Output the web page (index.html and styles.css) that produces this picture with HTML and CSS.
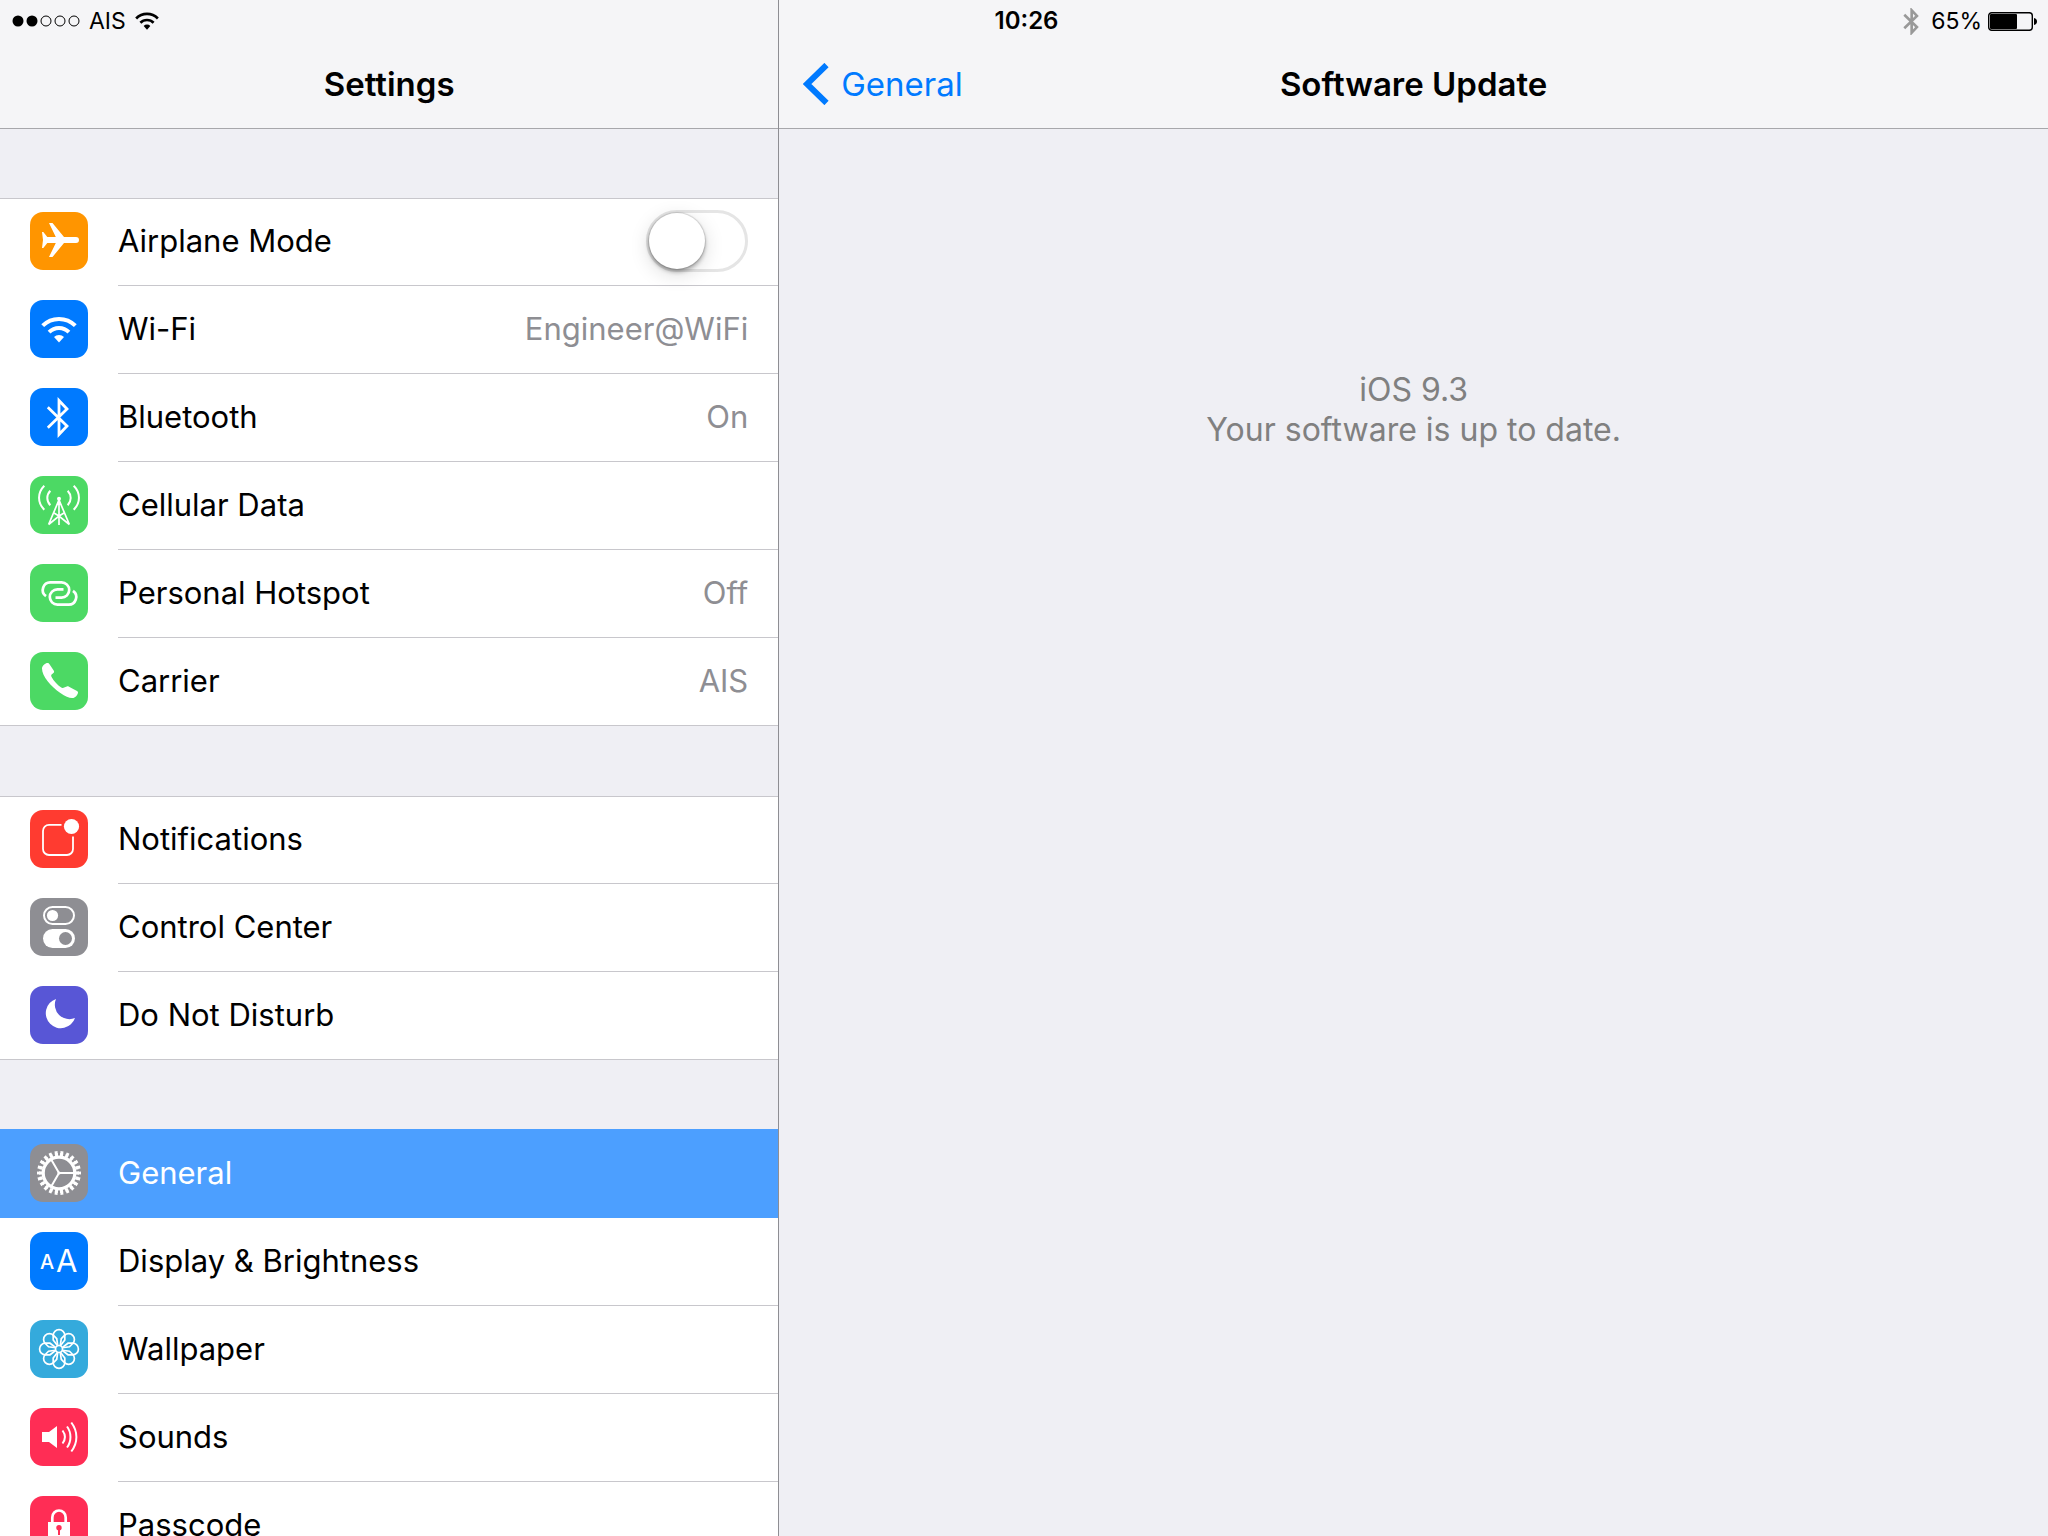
FILE: index.html
```html
<!DOCTYPE html>
<html lang="en">
<head>
    <meta charset="UTF-8">
    <meta name="viewport" content="width=device-width, initial-scale=1.0">
    <title>Settings</title>
    <link rel="stylesheet" href="styles.css">
</head>
<body>
    <!-- shapes used more than once -->
    <svg class="defs" aria-hidden="true">
        <symbol id="wifi" viewBox="11 16 36 27">
            <path d="M12.7 25.7a23 23 0 0 1 32.6 0M19.1 32.1a14 14 0 0 1 19.8 0" fill="none" stroke="currentColor" stroke-width="4"/>
            <path d="M24 37a7 7 0 0 1 10 0l-5 5.5z" fill="currentColor"/>
        </symbol>
        <symbol id="bluetooth" viewBox="16 9 24 41">
            <path d="M17.8 19.3L37 38l-8 8.5v-34L37 21 17.8 39.7" fill="none" stroke="currentColor"/>
        </symbol>
        <path id="petal" d="M27.6 25.8L23.2 20v-4.600a5.8 5.8 0 0 1 11.6 0V20l-4.400 5.800"/>
    </svg>

    <div class="status-bar">
        <div class="status-left">
            <svg class="signal" viewBox="0 0 68 12">
                <circle cx="6" cy="6" r="5.5"/>
                <circle cx="20" cy="6" r="5.5"/>
                <g fill="none" stroke="#000">
                    <circle cx="34" cy="6" r="5"/>
                    <circle cx="48" cy="6" r="5"/>
                    <circle cx="62" cy="6" r="5"/>
                </g>
            </svg>
            <span>AIS</span>
            <svg class="status-wifi"><use href="#wifi"/></svg>
        </div>
        <div class="clock">10:26</div>
        <div class="status-right">
            <svg class="status-bluetooth"><use href="#bluetooth"/></svg>
            <span>65%</span>
            <svg class="battery" viewBox="0 0 49 19">
                <rect x="0.7" y="0.7" width="43.6" height="17.6" rx="3" fill="none" stroke="#000" stroke-width="1.4"/>
                <rect x="2" y="2" width="27" height="15" rx="1"/>
                <path d="M46 6c2 .4 3 1.6 3 3.5s-1 3.1-3 3.500z"/>
            </svg>
        </div>
    </div>

    <aside class="sidebar">
        <header class="nav-bar">
            <h1>Settings</h1>
        </header>

        <ul class="group">
            <li class="row">
                <svg class="icon orange" viewBox="0 0 58 58">
                    <path d="M12 20h1.3l4 5h8.5L19 11h3.5L34 25h12a3 3 0 0 1 0 6H34L22.5 45H19l6.8-14h-8.5l-4 5H12l1-8z" fill="#fff"/>
                </svg>
                <div class="cell">
                    <label for="airplane">Airplane Mode</label>
                    <input type="checkbox" id="airplane" class="switch">
                </div>
            </li>
            <li class="row">
                <svg class="icon blue" viewBox="0 0 58 58"><use href="#wifi" x="11" y="16" width="36" height="27"/></svg>
                <div class="cell"><span>Wi-Fi</span><span class="value">Engineer@WiFi</span></div>
            </li>
            <li class="row">
                <svg class="icon blue" viewBox="0 0 58 58"><use href="#bluetooth" x="16" y="9" width="24" height="41" stroke-width="2.8"/></svg>
                <div class="cell"><span>Bluetooth</span><span class="value">On</span></div>
            </li>
            <li class="row">
                <svg class="icon green" viewBox="0 0 58 58">
                    <circle cx="29" cy="22.7" r="2" fill="#fff"/>
                    <g fill="none" stroke="#fff" stroke-width="1.7">
                        <path d="M18.6 48.5L29 24l10.4 24.5M29 23v26M24 37l5 3 5-3M18.6 48.5L29 40l10.4 8.5"/>
                        <path d="M20.3 14.7c-4 4.3-4 10.3 0 14.6M37.7 14.7c4 4.3 4 10.3 0 14.6M14.3 9.7c-7 7-7 17 0 24M43.7 9.7c7 7 7 17 0 24" stroke-width="2"/>
                    </g>
                </svg>
                <div class="cell"><span>Cellular Data</span></div>
            </li>
            <li class="row">
                <svg class="icon green" viewBox="0 0 58 58">
                    <g fill="none" stroke="#fff" stroke-width="2.7">
                        <path d="M16 32.2A7.6 7.6 0 0 1 20.8 18.4H31.6A7.6 7.6 0 0 1 31.6 33.6H25.5"/>
                        <path d="M16 32.2A7.6 7.6 0 0 1 20.8 18.4H31.6A7.6 7.6 0 0 1 31.6 33.6H25.5" transform="rotate(180 29.5 29.5)"/>
                    </g>
                </svg>
                <div class="cell"><span>Personal Hotspot</span><span class="value">Off</span></div>
            </li>
            <li class="row">
                <svg class="icon green" viewBox="0 0 58 58">
                    <path d="M12 16.5c0-3 3.5-5.5 5.5-5.5 1 0 1.4.3 2 1.2l4.2 6.3c.6 1 .5 1.6 0 2.3l-2.1 1.8c-.6.8-.5 1.5 0 2.4 2 4 6 8 9.6 10.6.8.6 1.5.6 2.3.2l3.3-1.3c.8-.3 1.4-.2 2.2.3l8 4.2c1 .6 1.2 1.3.9 2.3-.6 2.2-2.5 4.2-4.5 4.6-3 .6-7.5-.8-13-4.8C21 34.5 12 24.5 12 16.5z" fill="#fff"/>
                </svg>
                <div class="cell"><span>Carrier</span><span class="value">AIS</span></div>
            </li>
        </ul>

        <ul class="group">
            <li class="row">
                <svg class="icon red" viewBox="0 0 58 58">
                    <path d="M31.5 14.9H19a6 6 0 0 0-6 6V39a6 6 0 0 0 6 6h18a6 6 0 0 0 6-6V26.5" fill="none" stroke="#fff" stroke-width="1.8"/>
                    <circle cx="41.5" cy="16.5" r="7.6" fill="#fff"/>
                </svg>
                <div class="cell"><span>Notifications</span></div>
            </li>
            <li class="row">
                <svg class="icon gray" viewBox="0 0 58 58">
                    <rect x="14" y="9" width="30" height="17" rx="8.5" fill="none" stroke="#fff" stroke-width="2"/>
                    <circle cx="22.5" cy="17.5" r="5.6" fill="#fff"/>
                    <rect x="13" y="31" width="32" height="19" rx="9.5" fill="#fff"/>
                    <circle cx="35.5" cy="40.5" r="6.5" fill="#8e8e93"/>
                </svg>
                <div class="cell"><span>Control Center</span></div>
            </li>
            <li class="row">
                <svg class="icon purple" viewBox="0 0 58 58">
                    <path d="M26 13A15 15 0 1 0 45 32 14.5 14.5 0 0 1 26 13z" fill="#fff"/>
                </svg>
                <div class="cell"><span>Do Not Disturb</span></div>
            </li>
        </ul>

        <ul class="group">
            <li class="row selected">
                <svg class="icon gray" viewBox="0 0 58 58">
                    <g fill="none" stroke="#fff">
                        <circle cx="29" cy="29" r="15.8" stroke-width="3.2"/>
                        <circle cx="29" cy="29" r="18.5" stroke-width="3" pathLength="220" stroke-dasharray="6 4" stroke-dashoffset="3"/>
                        <circle cx="29" cy="29" r="20.5" stroke-width="3" pathLength="220" stroke-dasharray="5 5" stroke-dashoffset="2.5"/>
                        <path d="M29 29h15M29 29L21.5 16M29 29l-7.5 13" stroke-width="2"/>
                    </g>
                    <circle cx="29" cy="29" r="1.6" fill="#fff"/>
                </svg>
                <div class="cell"><span>General</span></div>
            </li>
            <li class="row">
                <svg class="icon blue" viewBox="0 0 58 58">
                    <g fill="#fff" font-weight="500">
                        <text x="10" y="37" font-size="20">A</text>
                        <text x="26" y="40" font-size="31" font-weight="400">A</text>
                    </g>
                </svg>
                <div class="cell"><span>Display &amp; Brightness</span></div>
            </li>
            <li class="row">
                <svg class="icon cyan" viewBox="0 0 58 58">
                    <g fill="none" stroke="#fff" stroke-width="1.7">
                        <circle cx="29" cy="29" r="3.5"/>
                        <use href="#petal"/>
                        <use href="#petal" transform="rotate(45 29 29)"/>
                        <use href="#petal" transform="rotate(90 29 29)"/>
                        <use href="#petal" transform="rotate(135 29 29)"/>
                        <use href="#petal" transform="rotate(180 29 29)"/>
                        <use href="#petal" transform="rotate(225 29 29)"/>
                        <use href="#petal" transform="rotate(270 29 29)"/>
                        <use href="#petal" transform="rotate(315 29 29)"/>
                    </g>
                </svg>
                <div class="cell"><span>Wallpaper</span></div>
            </li>
            <li class="row">
                <svg class="icon pink" viewBox="0 0 58 58">
                    <path d="M12 24h7l8-6v22l-8-6h-7z" fill="#fff"/>
                    <path d="M32.5 22.5c3 4 3 9 0 13M37 18.5c4.6 6 4.6 15 0 21M41.3 14.5c6.8 9 6.8 20 0 29" fill="none" stroke="#fff" stroke-width="2"/>
                </svg>
                <div class="cell"><span>Sounds</span></div>
            </li>
            <li class="row">
                <svg class="icon pink" viewBox="0 0 58 58">
                    <path d="M22.3 27v-5.5a6.7 7 0 0 1 13.4 0V27" fill="none" stroke="#fff" stroke-width="2.7"/>
                    <rect x="18" y="26" width="22" height="19" fill="#fff"/>
                    <circle cx="29" cy="31.7" r="2.7" fill="#ff2d55"/>
                    <path d="M29 32v7" stroke="#ff2d55" stroke-width="2"/>
                </svg>
                <div class="cell"><span>Passcode</span></div>
            </li>
        </ul>
    </aside>

    <main class="detail">
        <header class="nav-bar">
            <a href="#" class="back">
                <svg viewBox="0 0 26 42"><path d="M23.5 2L4 21l19.5 19" fill="none" stroke="currentColor" stroke-width="6"/></svg>
                General
            </a>
            <h2>Software Update</h2>
        </header>
        <p class="message">iOS 9.3<br>Your software is up to date.</p>
    </main>
</body>
</html>
```
FILE: styles.css
```css
* {
    box-sizing: border-box;
}

body {
    margin: 0;
    height: 100vh;
    display: grid;
    grid-template-columns: 38% 1fr;
    grid-template-rows: 42px 1fr;
    overflow: hidden;
    background: #efeff4;
    color: #000;
    font-family: Inter, "Liberation Sans", sans-serif;
    font-size: 31px;
    line-height: 40px;
}

.defs {
    position: absolute;
    width: 0;
    height: 0;
}

/* status bar, shares the top of the grid with both columns */
.status-bar {
    grid-area: 1 / 1 / 2 / 3;
    z-index: 1;
    display: grid;
    grid-template-columns: 1fr auto 1fr;
    align-items: center;
    padding: 0 11px 0 12px;
    font-size: 23px;
}

.status-left,
.status-right {
    display: flex;
    align-items: center;
}

.status-left {
    gap: 9px;
}

.status-right {
    justify-content: flex-end;
    gap: 6px;
}

.signal {
    width: 68px;
    height: 12px;
}

.status-wifi {
    width: 24px;
    height: 18px;
}

.status-bluetooth {
    width: 16px;
    height: 27px;
    margin-right: 6px;
    color: #999;
    stroke-width: 4;
}

.battery {
    width: 49px;
    height: 19px;
}

.clock {
    padding-left: 4px;
    font-size: 24px;
    font-weight: 600;
}

.sidebar {
    grid-area: 1 / 1 / 3 / 2;
    min-width: 0;
}

.detail {
    grid-area: 1 / 2 / 3 / 3;
    border-left: 1px solid #8e8e93;
}

.nav-bar {
    height: 129px;
    padding-top: 40px;
    display: grid;
    grid-template-columns: 1fr auto 1fr;
    align-items: center;
    background: #f5f5f7;
    border-bottom: 1px solid #a7a7ab;
}

h1,
h2 {
    grid-column: 2;
    margin: 0;
    font-size: 33px;
    font-weight: 600;
}

.back {
    display: flex;
    align-items: center;
    gap: 12px;
    padding-left: 24px;
    color: #007aff;
    font-size: 33px;
    text-decoration: none;
}

.back svg {
    width: 26px;
    height: 42px;
}

.message {
    margin: 241px 0 0;
    color: #808080;
    font-size: 32px;
    text-align: center;
}

.group {
    list-style: none;
    margin: 69px 0 70px;
    padding: 0;
    background: #fff;
    border-bottom: 1px solid #c8c7cc;
    box-shadow: inset 0 1px #c8c7cc;
}

.group + .group {
    margin-top: 0;
}

.row {
    display: flex;
    height: 88px;
    padding-left: 30px;
}

.row:last-child {
    height: 87px;
}

.icon {
    flex: none;
    width: 58px;
    height: 58px;
    margin: 14px 30px 0 0;
    border-radius: 13px;
    color: #fff;
}

.cell {
    flex: 1;
    display: flex;
    align-items: center;
    justify-content: space-between;
    padding: 0 30px 2px 0;
    border-bottom: 1px solid #c8c7cc;
}

.row:last-child .cell {
    border-bottom: 0;
}

.value {
    color: #8e8e93;
}

.selected {
    background: #4c9fff;
    box-shadow: 0 -1px #4c9fff;
    color: #fff;
}

.selected .cell {
    border-color: #4c9fff;
}

.switch {
    appearance: none;
    display: flex;
    width: 102px;
    height: 62px;
    margin: 0;
    border: 3px solid #e5e5e5;
    border-radius: 31px;
    background: #fff;
}

.switch::before {
    content: "";
    width: 56px;
    height: 56px;
    border-radius: 50%;
    background: #fff;
    box-shadow: 0 0 1px 1px rgba(0, 0, 0, 0.12), 0 3px 4px rgba(0, 0, 0, 0.3), 0 5px 20px rgba(0, 0, 0, 0.15);
}

.switch:checked {
    justify-content: flex-end;
    border-color: #4cd964;
    background: #4cd964;
}

.orange { background: #ff9500; }
.blue { background: #007aff; }
.green { background: #4cd964; }
.red { background: #ff3b30; }
.gray { background: #8e8e93; }
.purple { background: #5856d6; }
.cyan { background: #34aadc; }
.pink { background: #ff2d55; }
```
